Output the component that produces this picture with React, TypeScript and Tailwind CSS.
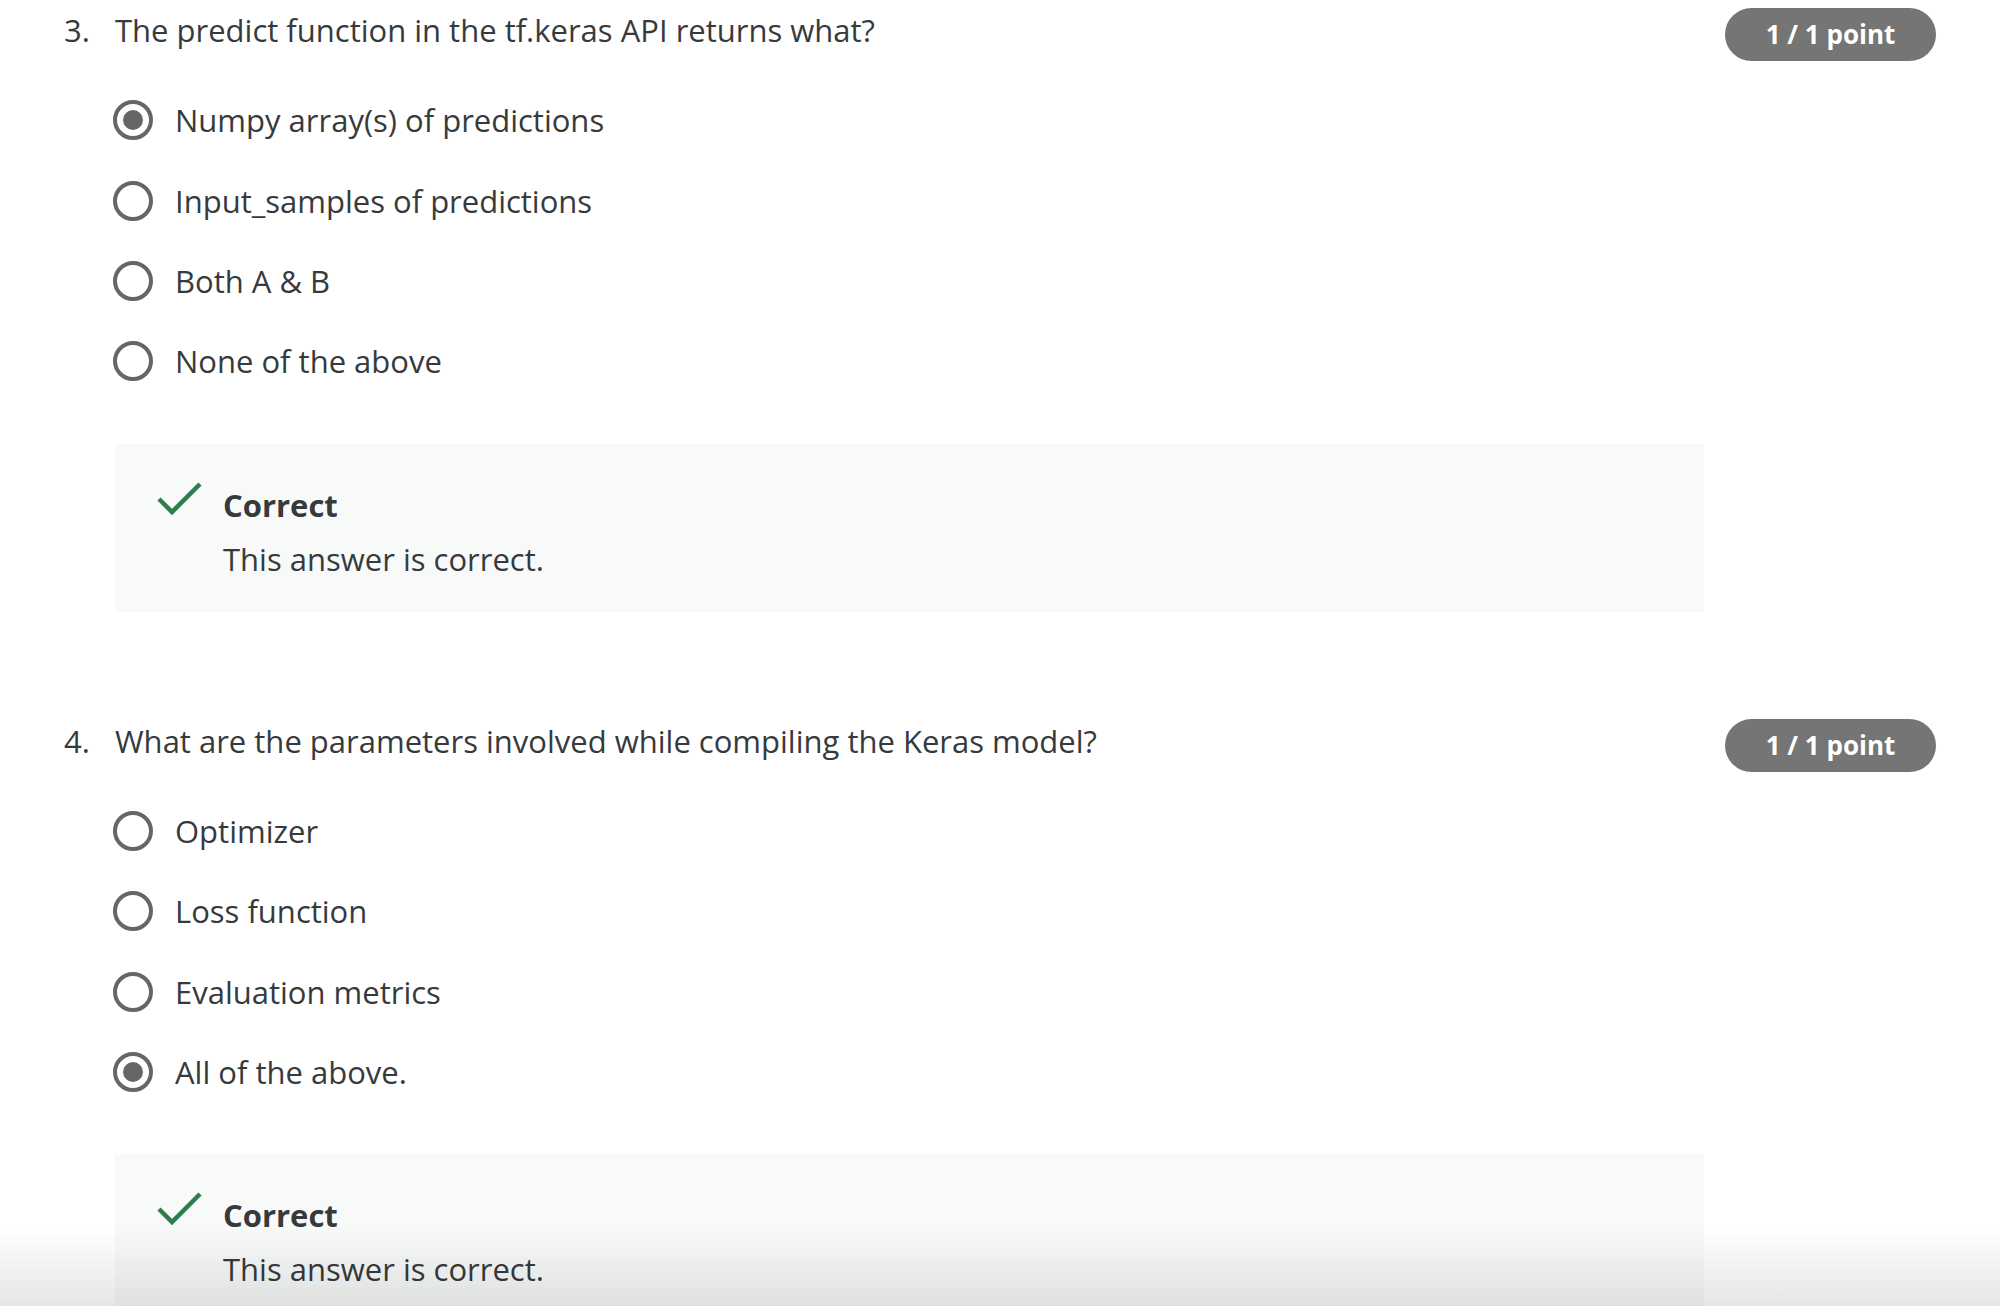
import React from 'react';

type Question = {
    num: number;
    text: string;
    options: string[];
    selected: number;
};

const questions: Question[] = [
    {
        num: 3,
        text: 'The predict function in the tf.keras API returns what?',
        options: ['Numpy array(s) of predictions', 'Input_samples of predictions', 'Both A & B', 'None of the above'],
        selected: 0,
    },
    {
        num: 4,
        text: 'What are the parameters involved while compiling the Keras model?',
        options: ['Optimizer', 'Loss function', 'Evaluation metrics', 'All of the above.'],
        selected: 3,
    },
];

const Radio = ({ checked }: { checked: boolean }) => (
    <span className="w-[40px] h-[40px] rounded-full border-[4px] border-[#666666] flex items-center justify-center shrink-0">
        {checked && <span className="w-[20px] h-[20px] rounded-full bg-[#666666]" />}
    </span>
);

const CheckIcon = () => (
    <svg width="46" height="36" viewBox="0 0 46 36" className="shrink-0">
        <polyline points="2,18 15,31 43,3" fill="none" stroke="#2e7d4f" strokeWidth="4.5" />
    </svg>
);

const QuestionBlock = ({ q }: { q: Question }) => (
    <div className="flex">
        <div className="w-[51px] shrink-0 pt-[10px] leading-[40px]">{q.num}.</div>
        <div className="flex-1">
            <div className="pt-[10px] leading-[40px]">{q.text}</div>
            <div className="mt-[30px]">
                {q.options.map((opt, i) => (
                    <div key={opt} className="h-[80.4px] flex items-center -ml-[2px]">
                        <Radio checked={i === q.selected} />
                        <span className="ml-[22px] leading-[40px]">{opt}</span>
                    </div>
                ))}
            </div>
            <div className="mt-[42px] bg-[#f8f9f9] pt-[41px] pb-[33px] pl-[42px] flex">
                <div className="-mt-[4px]">
                    <CheckIcon />
                </div>
                <div className="ml-[20px]">
                    <div className="font-bold leading-[40px]">Correct</div>
                    <div className="mt-[14px] leading-[40px]">This answer is correct.</div>
                </div>
            </div>
        </div>
        <div className="w-[232px] shrink-0 flex justify-end pt-[8px]">
            <span className="w-[211px] h-[53px] rounded-full bg-[#757575] text-white font-bold text-[26px] flex items-center justify-center">
                1 / 1 point
            </span>
        </div>
    </div>
);

export default function App() {
    return (
        <div
            className="relative h-screen overflow-hidden bg-white text-[#373a3c] text-[31px] pl-[64px] pr-[64px]"
            style={{ fontFamily: '"Open Sans", "Noto Sans", sans-serif' }}
        >
            <div className="flex flex-col gap-[99px]">
                {questions.map((q) => (
                    <QuestionBlock key={q.num} q={q} />
                ))}
            </div>
            <div className="absolute left-0 right-0 bottom-0 h-[80px] bg-gradient-to-b from-transparent to-black/10 pointer-events-none" />
        </div>
    );
}
